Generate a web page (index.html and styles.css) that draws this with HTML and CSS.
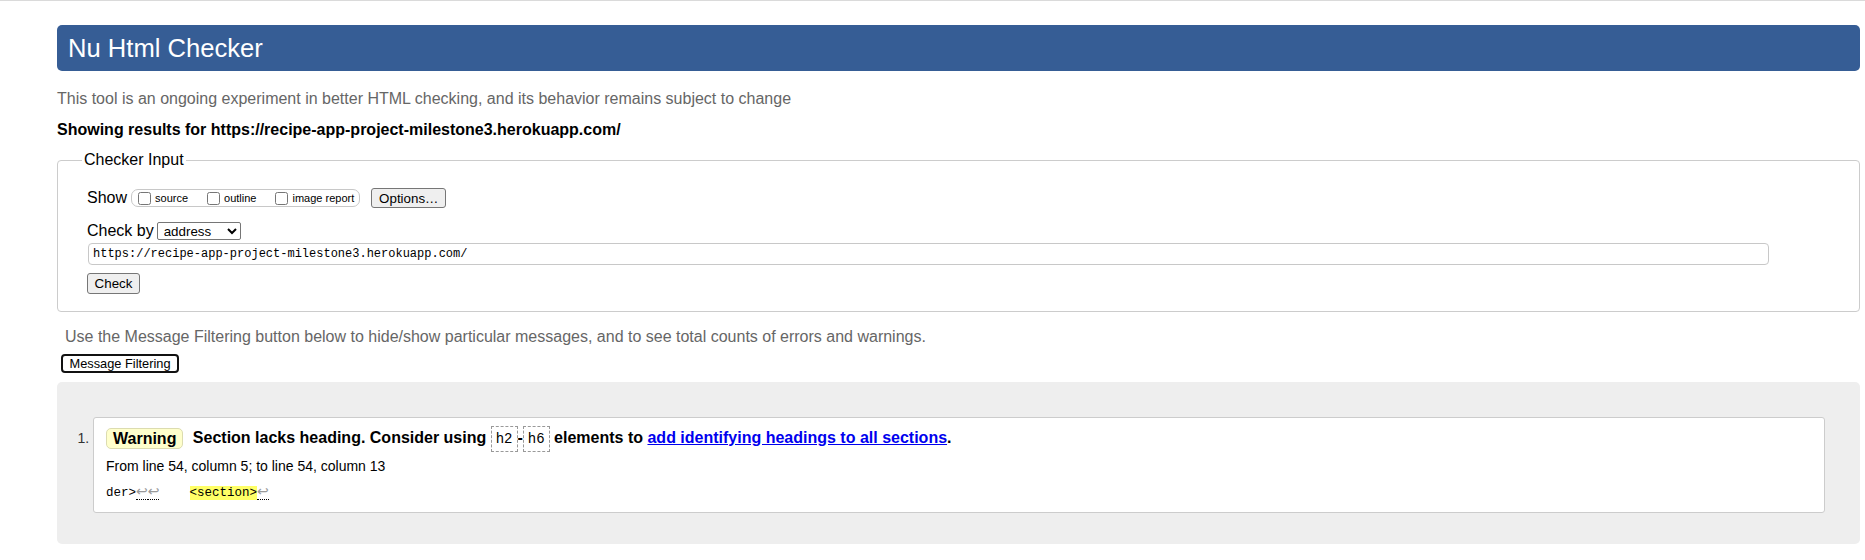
FILE: index.html
```html
<!DOCTYPE html>
<html lang="en">
<head>
<meta charset="utf-8">
<title>Nu Html Checker</title>
<link rel="stylesheet" href="styles.css">
</head>
<body>
<div class="page">
  <h1 class="title">Nu Html Checker</h1>
  <p class="tagline">This tool is an ongoing experiment in better HTML checking, and its behavior remains subject to change</p>
  <p class="results-for">Showing results for https://recipe-app-project-milestone3.herokuapp.com/</p>

  <fieldset class="checker">
    <legend>Checker Input</legend>
    <div class="checker-body">
      <div class="field-row show-row">
        <span class="row-label">Show</span>
        <span class="show-group">
          <label><input type="checkbox">source</label>
          <label><input type="checkbox">outline</label>
          <label><input type="checkbox">image report</label>
        </span>
        <button type="button" class="btn btn-options">Options…</button>
      </div>
      <div class="field-row check-by">
        <span class="row-label label-by">Check by</span>
        <select class="mode-select"><option>address</option></select>
      </div>
      <input class="url-input" type="text" value="https://recipe-app-project-milestone3.herokuapp.com/">
      <button type="button" class="btn btn-check">Check</button>
    </div>
  </fieldset>

  <p class="filter-hint">Use the Message Filtering button below to hide/show particular messages, and to see total counts of errors and warnings.</p>
  <button type="button" class="filter-btn">Message Filtering</button>

  <div class="results">
    <ol class="messages">
      <li class="message">
        <p class="msg-line"><span class="badge">Warning</span> Section lacks heading. Consider using <code class="el">h2</code>-<code class="el">h6</code> elements to <a href="#" class="msg-link">add identifying headings to all sections</a>.</p>
        <p class="location">From line 54, column 5; to line 54, column 13</p>
        <p class="extract"><code>der&gt;<span class="lf">↩</span><span class="lf">↩</span>    <b class="hl">&lt;section&gt;</b><span class="lf">↩</span></code></p>
      </li>
    </ol>
  </div>
</div>
</body>
</html>
```

FILE: styles.css
```css
* {
  box-sizing: border-box;
}

html,
body {
  margin: 0;
  padding: 0;
  background: #ffffff;
}

body {
  border-top: 1px solid #dadada;
  font-family: "Liberation Sans", Arial, sans-serif;
  color: #000000;
}

.page {
  padding: 0 5px 0 57px;
}

.title {
  margin: 24px 0 0;
  height: 46px;
  padding: 9px 11px;
  background: #365d95;
  color: #ffffff;
  font-size: 25.6px;
  line-height: 28px;
  font-weight: normal;
  border-radius: 5px;
}

.tagline {
  margin: 19px 0 0;
  font-size: 16px;
  line-height: 18px;
  color: #666666;
}

.results-for {
  margin: 13px 0 0;
  font-size: 16px;
  line-height: 18px;
  font-weight: bold;
}

.checker {
  margin: 12px 0 0;
  padding: 0 91px 17px 24px;
  border: 1px solid #cccccc;
  border-radius: 4px;
  min-width: 0;
}

.checker legend {
  padding: 0 2px;
  font-size: 16px;
  line-height: 18px;
}

.checker-body {
  padding-left: 5px;
}

.field-row {
  display: flex;
  align-items: center;
  height: 20px;
}

.show-row {
  margin-top: 19px;
}

.row-label {
  font-size: 16px;
  line-height: 18px;
  margin-right: 4px;
}

.show-group {
  display: flex;
  align-items: center;
  gap: 19px;
  height: 18px;
  padding: 0 5px 0 6px;
  margin-right: 11px;
  border: 1px solid #c8c8c8;
  border-radius: 7px;
  font-size: 11px;
}

.show-group label {
  display: flex;
  align-items: center;
}

.show-group input {
  width: 13px;
  height: 13px;
  margin: 0 4px 0 0;
}

.btn {
  font: 13.333px "Liberation Sans", Arial, sans-serif;
  color: #000000;
  background: #efefef;
  border: 1px solid #767676;
  border-radius: 3px;
  padding: 0;
  text-align: center;
}

.btn-options {
  width: 75px;
  height: 20px;
}

.check-by {
  margin-top: 14px;
  height: 18px;
}

.label-by {
  margin-right: 3px;
}

.mode-select {
  width: 84px;
  height: 18px;
  padding: 0 0 0 2px;
  font: 13.333px "Liberation Sans", Arial, sans-serif;
  color: #000000;
  background: #ffffff;
  border: 1px solid #767676;
  border-radius: 2px;
}

.url-input {
  display: block;
  width: 100%;
  height: 22px;
  margin: 3px 0 0 1px;
  padding: 0 4px;
  border: 1px solid #c8c8c8;
  border-radius: 4px;
  font: 12px "Liberation Mono", monospace;
  color: #000000;
  background: #ffffff;
}

.btn-check {
  display: block;
  width: 53px;
  height: 21px;
  margin-top: 8px;
}

.filter-hint {
  margin: 16px 0 0 8px;
  font-size: 16px;
  line-height: 18px;
  color: #666666;
}

.filter-btn {
  display: block;
  width: 118px;
  height: 19px;
  margin: 8px 0 0 4px;
  padding: 0;
  border: 2px solid #111111;
  border-radius: 4px;
  background: #ffffff;
  color: #000000;
  font: 12.8px "Liberation Sans", Arial, sans-serif;
}

.results {
  margin-top: 9px;
  padding: 35px 35px 31px 36px;
  background: #eeeeee;
  border-radius: 5px;
}

.messages {
  margin: 0;
  padding: 0;
  list-style: decimal outside;
}

.message {
  font-size: 14px;
  padding: 7px 12px 10px;
  background: #ffffff;
  border: 1px solid #cccccc;
  border-radius: 3px;
}

.message::marker {
  color: #333333;
}

.msg-line {
  margin: 0;
  font-size: 16px;
  line-height: 26px;
  font-weight: bold;
}

.badge {
  display: inline-block;
  vertical-align: middle;
  line-height: 19px;
  padding: 0 6px;
  margin-right: 5px;
  background: #ffffcc;
  border: 1px solid #dcdcb0;
  border-radius: 5px;
}

.el {
  display: inline-block;
  vertical-align: middle;
  padding: 4px;
  font: 14px/16px "Liberation Mono", monospace;
  font-weight: normal;
  border: 1px dashed #999999;
}

.msg-link {
  color: #0000ee;
  text-decoration: underline;
}

.location {
  margin: 6px 0 0;
  font-size: 14px;
  line-height: 16px;
}

.extract {
  margin: 8px 0 0;
  font: 12.5px/18px "Liberation Mono", monospace;
  white-space: pre;
}

.extract code {
  font: inherit;
}

.lf {
  font-family: "DejaVu Sans", sans-serif;
  font-size: 14px;
  color: #999999;
  border-bottom: 1px dotted #000000;
}

.hl {
  font-weight: normal;
  background: #ffff66;
}
```
